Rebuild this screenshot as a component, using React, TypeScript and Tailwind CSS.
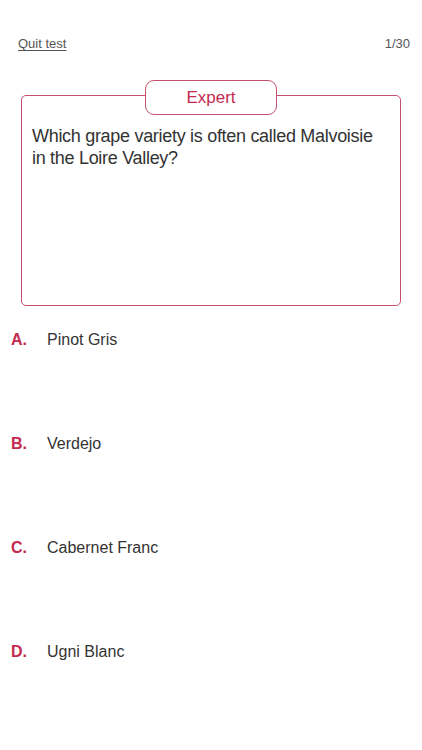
const options = [
  { letter: 'A.', text: 'Pinot Gris' },
  { letter: 'B.', text: 'Verdejo' },
  { letter: 'C.', text: 'Cabernet Franc' },
  { letter: 'D.', text: 'Ugni Blanc' },
]

export default function App() {
  return (
    <div
      className="min-h-[750px] w-[422px] bg-white"
      style={{ fontFamily: '"Liberation Sans", Arial, sans-serif' }}
    >
      <div className="flex items-center justify-between pl-[18px] pr-[12px] pt-[36px] text-[13px] leading-[16px] text-[#555]">
        <span className="underline underline-offset-2">Quit test</span>
        <span>1/30</span>
      </div>

      <div className="relative mx-[21px] mt-[43px] h-[211px] rounded-[5px] border border-[#c9506c] px-[10px] pt-[29px]">
        <div className="absolute left-1/2 top-[-16px] flex h-[35px] w-[132px] -translate-x-1/2 items-center justify-center rounded-[9px] border border-[#c9506c] bg-white text-[17px] text-[#c42a4f]">
          Expert
        </div>
        <p className="text-[18px] leading-[22px] tracking-[-0.3px] text-[#333]">
          Which grape variety is often called Malvoisie in the Loire Valley?
        </p>
      </div>

      <div className="mt-[24px]">
        {options.map((o) => (
          <div key={o.letter} className="flex h-[104px] items-start">
            <span className="w-[47px] pl-[11px] text-[16px] font-bold leading-[20px] text-[#c42a4f]">
              {o.letter}
            </span>
            <span className="text-[16px] leading-[20px] text-[#333]">{o.text}</span>
          </div>
        ))}
      </div>
    </div>
  )
}
